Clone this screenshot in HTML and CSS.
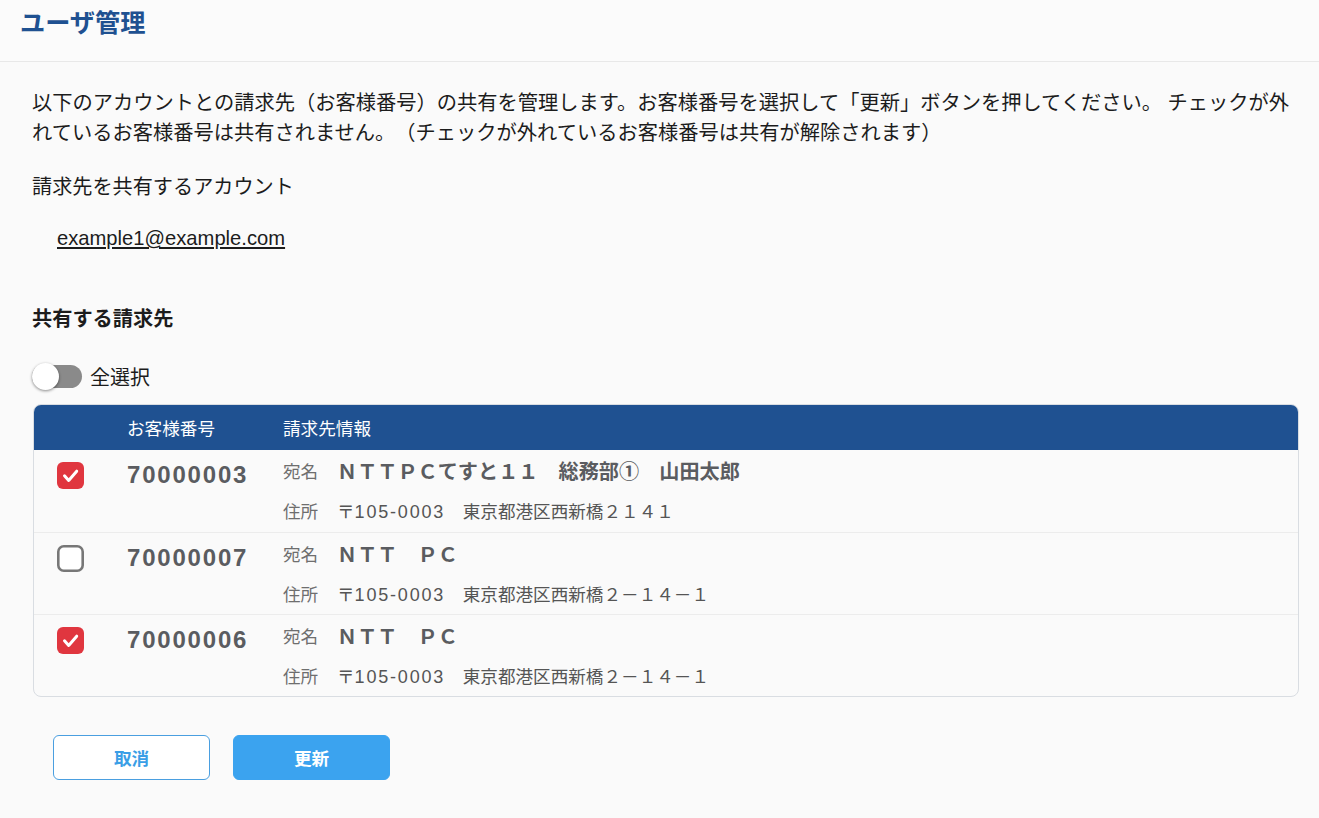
FILE: index.html
```html
<!DOCTYPE html>
<html lang="ja">
<head>
  <meta charset="UTF-8">
  <title>ユーザ管理</title>
  <link rel="stylesheet" href="styles.css">
</head>
<body>

  <header class="page-header">
    <h1>ユーザ管理</h1>
  </header>

  <main class="content">
    <p class="lead">以下のアカウントとの請求先（お客様番号）の共有を管理します。お客様番号を選択して「更新」ボタンを押してください。 チェックが外れているお客様番号は共有されません。（チェックが外れているお客様番号は共有が解除されます）</p>

    <p class="field-label">請求先を共有するアカウント</p>
    <p class="account"><a href="#">example1@example.com</a></p>

    <h2 class="section-title">共有する請求先</h2>

    <label class="toggle">
      <span class="switch"><span class="knob"></span></span>
      全選択
    </label>

    <div class="billing-table">
      <div class="thead">
        <span></span>
        <span>お客様番号</span>
        <span>請求先情報</span>
      </div>

      <div class="row">
        <span class="check">
          <svg width="27" height="27" viewBox="0 0 27 27"><rect width="27" height="27" rx="6" fill="#e0363f"/><path d="M7.5 13.8l4.2 4.6 8-9.2" fill="none" stroke="#fff" stroke-width="3" stroke-linecap="round" stroke-linejoin="round"/></svg>
        </span>
        <span class="num">70000003</span>
        <div class="info">
          <div class="line"><span class="key">宛名</span><span class="name">ＮＴＴＰＣてすと１１　総務部①　山田太郎</span></div>
          <div class="line"><span class="key">住所</span><span class="addr">〒<span class="zip">105-0003</span>　東京都港区西新橋２１４１</span></div>
        </div>
      </div>

      <div class="row">
        <span class="check">
          <svg width="27" height="27" viewBox="0 0 27 27"><rect x="1.3" y="1.3" width="24.4" height="24.4" rx="5.5" fill="#fff" stroke="#777" stroke-width="2.6"/></svg>
        </span>
        <span class="num">70000007</span>
        <div class="info">
          <div class="line"><span class="key">宛名</span><span class="name">ＮＴＴ　ＰＣ</span></div>
          <div class="line"><span class="key">住所</span><span class="addr">〒<span class="zip">105-0003</span>　東京都港区西新橋２－１４－１</span></div>
        </div>
      </div>

      <div class="row">
        <span class="check">
          <svg width="27" height="27" viewBox="0 0 27 27"><rect width="27" height="27" rx="6" fill="#e0363f"/><path d="M7.5 13.8l4.2 4.6 8-9.2" fill="none" stroke="#fff" stroke-width="3" stroke-linecap="round" stroke-linejoin="round"/></svg>
        </span>
        <span class="num">70000006</span>
        <div class="info">
          <div class="line"><span class="key">宛名</span><span class="name">ＮＴＴ　ＰＣ</span></div>
          <div class="line"><span class="key">住所</span><span class="addr">〒<span class="zip">105-0003</span>　東京都港区西新橋２－１４－１</span></div>
        </div>
      </div>
    </div>

    <div class="actions">
      <button type="button" class="btn btn-outline">取消</button>
      <button type="submit" class="btn btn-primary">更新</button>
    </div>
  </main>

</body>
</html>
```

FILE: styles.css
```css
body {
  margin: 0;
  background: #fafafa;
  color: #1c1c1c;
  font-family: "Liberation Sans", "Noto Sans CJK JP", sans-serif;
  text-spacing-trim: space-all;
}
p, h1, h2 { margin: 0; }

.page-header {
  height: 61px;
  background: #fbfbfb;
  border-bottom: 1px solid #e8e8e8;
  padding-left: 20px;
  display: flex;
  align-items: center;
}
.page-header h1 {
  font-size: 25.2px;
  font-weight: bold;
  color: #1f5191;
  margin-top: -19px;
}

.content { padding: 26px 20px 40px 32px; }
.lead { font-size: 20.25px; line-height: 30px; }
.field-label { font-size: 20.15px; line-height: 30px; margin-top: 24px; }
.account { font-size: 20.2px; line-height: 30px; margin-top: 21px; padding-left: 25px; }
.account a { color: #1c1c1c; }
.section-title { font-size: 20.2px; line-height: 30px; font-weight: bold; margin-top: 51px; }

.toggle {
  display: flex;
  align-items: center;
  height: 26px;
  margin-top: 29px;
  font-size: 20px;
}
.switch {
  position: relative;
  width: 50px;
  height: 23px;
  margin-right: 8px;
  background: #8a8a8a;
  border-radius: 12px;
}
.knob {
  position: absolute;
  left: 0;
  top: -2px;
  width: 27px;
  height: 27px;
  border-radius: 50%;
  background: #fff;
  box-shadow: 0 1px 3px rgba(0, 0, 0, 0.45);
}

.billing-table {
  margin-top: 15px;
  border: 1px solid #d9dde2;
  border-radius: 8px;
  overflow: hidden;
  margin-left: 1px;
}
.thead, .row {
  display: grid;
  grid-template-columns: 93px 156px 1fr;
}
.thead {
  height: 45px;
  align-items: center;
  background: #1f5191;
  color: #fff;
  font-size: 17.6px;
}
.row { height: 82px; box-sizing: border-box; }
.row + .row { border-top: 1px solid #ececec; }
.check { padding: 12px 0 0 23px; line-height: 0; }
.num {
  padding-top: 13px;
  font-size: 24px;
  line-height: 24px;
  font-weight: bold;
  letter-spacing: 1.8px;
  color: #5a5c60;
}
.line {
  height: 40px;
  display: flex;
  align-items: center;
}
.line + .line { height: 41px; }
.key { width: 54px; font-size: 17.6px; color: #6e6e6e; }
.name { font-size: 20.15px; font-weight: bold; color: #5a5c60; }
.addr { font-size: 17.6px; color: #555; }
.zip { font-size: 18px; letter-spacing: 1.8px; }

.actions {
  display: flex;
  gap: 23px;
  margin: 38px 0 0 21px;
}
.btn {
  width: 157px;
  height: 45px;
  border-radius: 6px;
  font-family: inherit;
  font-size: 17.6px;
  font-weight: bold;
  cursor: pointer;
}
.btn-outline { background: #fff; border: 1px solid #4a9fe0; color: #3a9ee6; }
.btn-primary { background: #3ba3ef; border: 1px solid #3ba3ef; color: #fff; }
```
